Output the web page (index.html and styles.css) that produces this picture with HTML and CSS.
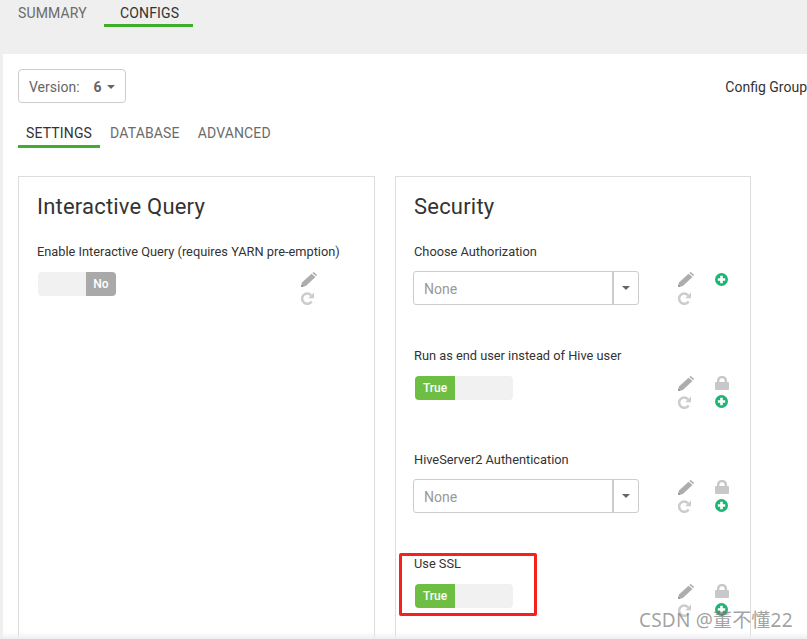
FILE: index.html
```html
<!DOCTYPE html>
<html lang="en">
<head>
<meta charset="utf-8">
<title>Configs</title>
<link rel="stylesheet" href="styles.css">
</head>
<body>
<svg class="defs" width="0" height="0" aria-hidden="true">
  <symbol id="i-pencil" viewBox="0 0 16 15">
    <path d="M0 15 1 10.500 10.500 1.800 14.500 5 4.800 14Z" fill="#adadad"/>
    <path d="M11.500 1 12.500 0 16 3 15.200 4Z" fill="#a0a0a0"/>
    <path d="M0 15 .6 12.400 2.800 14.400Z" fill="#8f8f8f"/>
  </symbol>
  <symbol id="i-refresh" viewBox="0 0 13 13">
    <path d="M10.600 9.300A5.100 5.100 0 1 1 10 3.300" fill="none" stroke="#cccccc" stroke-width="2.500"/>
    <path d="M13 .5V6.300H7.200Z" fill="#cccccc"/>
  </symbol>
  <symbol id="i-lock" viewBox="0 0 14 14">
    <path d="M3.200 7V4.300a3.800 3.300 0 0 1 7.600 0V7" fill="none" stroke="#c8c8c8" stroke-width="2.400"/>
    <rect x="0" y="6" width="14" height="8" rx=".8" fill="#c8c8c8"/>
  </symbol>
  <symbol id="i-add" viewBox="0 0 14 14">
    <circle cx="7" cy="7" r="7" fill="#1eb475"/>
    <path d="M5.600 3h2.800v2.600H11v2.800H8.400V11H5.600V8.400H3V5.600h2.600Z" fill="#fff"/>
  </symbol>
</svg>

<div class="page">
  <nav class="top-tabs">
    <a class="top-tab first">SUMMARY</a>
    <a class="top-tab active">CONFIGS</a>
  </nav>

  <main class="main">
    <div class="version-row">
      <button class="version-btn">Version: <b class="version-num">6</b><span class="caret"></span></button>
      <span class="config-group">Config Group</span>
    </div>

    <nav class="sub-tabs">
      <a class="sub-tab active">SETTINGS</a>
      <a class="sub-tab">DATABASE</a>
      <a class="sub-tab">ADVANCED</a>
    </nav>

    <div class="cards">
      <section class="card card-left">
        <h2 class="card-title">Interactive Query</h2>
        <div class="field">
          <div class="field-label">Enable Interactive Query (requires YARN pre-emption)</div>
          <div class="control-row">
            <div class="control">
              <div class="toggle toggle-off"><span class="toggle-track"></span><span class="toggle-no">No</span></div>
            </div>
            <div class="tools">
              <svg class="ico-pencil"><use href="#i-pencil"/></svg>
              <span></span>
              <svg class="ico-refresh"><use href="#i-refresh"/></svg>
            </div>
          </div>
        </div>
      </section>

      <section class="card">
        <h2 class="card-title">Security</h2>
        <div class="field">
          <div class="field-label">Choose Authorization</div>
          <div class="control-row">
            <div class="control">
              <div class="combo"><span class="combo-value">None</span><span class="combo-btn"><span class="caret"></span></span></div>
            </div>
            <div class="tools">
              <svg class="ico-pencil"><use href="#i-pencil"/></svg>
              <svg class="ico-add"><use href="#i-add"/></svg>
              <svg class="ico-refresh"><use href="#i-refresh"/></svg>
            </div>
          </div>
        </div>
        <div class="field">
          <div class="field-label">Run as end user instead of Hive user</div>
          <div class="control-row">
            <div class="control">
              <div class="toggle toggle-on"><span class="toggle-yes">True</span><span class="toggle-track"></span></div>
            </div>
            <div class="tools">
              <svg class="ico-pencil"><use href="#i-pencil"/></svg>
              <svg class="ico-lock"><use href="#i-lock"/></svg>
              <svg class="ico-refresh"><use href="#i-refresh"/></svg>
              <svg class="ico-add"><use href="#i-add"/></svg>
            </div>
          </div>
        </div>
        <div class="field">
          <div class="field-label">HiveServer2 Authentication</div>
          <div class="control-row">
            <div class="control">
              <div class="combo"><span class="combo-value">None</span><span class="combo-btn"><span class="caret"></span></span></div>
            </div>
            <div class="tools">
              <svg class="ico-pencil"><use href="#i-pencil"/></svg>
              <svg class="ico-lock"><use href="#i-lock"/></svg>
              <svg class="ico-refresh"><use href="#i-refresh"/></svg>
              <svg class="ico-add"><use href="#i-add"/></svg>
            </div>
          </div>
        </div>
        <div class="field">
          <div class="field-label">Use SSL</div>
          <div class="control-row">
            <div class="control">
              <div class="toggle toggle-on"><span class="toggle-yes">True</span><span class="toggle-track"></span></div>
            </div>
            <div class="tools">
              <svg class="ico-pencil"><use href="#i-pencil"/></svg>
              <svg class="ico-lock"><use href="#i-lock"/></svg>
              <svg class="ico-refresh"><use href="#i-refresh"/></svg>
              <svg class="ico-add"><use href="#i-add"/></svg>
            </div>
          </div>
        </div>
      </section>
    </div>
  </main>

  <div class="highlight"></div>
  <div class="bottom-fade"></div>
  <div class="watermark">CSDN @董不懂22</div>
</div>
</body>
</html>
```

FILE: styles.css
```css
* { box-sizing: border-box; }
html, body { margin: 0; padding: 0; height: 100%; overflow: hidden; }
body { font-family: Roboto, "Liberation Sans", sans-serif; color: #333; background: #efefef; }
.defs { position: absolute; }

.page { position: relative; width: 807px; height: 639px; overflow: hidden; background: #efefef; }

.top-tabs { display: flex; height: 54px; padding-left: 4px; align-items: flex-start; }
.top-tab { display: block; height: 27px; padding: 4px 16px 0 14px; font-size: 14px; line-height: 18px; letter-spacing: .15px; color: #6b6b6b; }
.top-tab.first { width: 100px; }
.top-tab.active { width: 89px; padding: 4px 0 0 16px; color: #333; border-bottom: 3px solid #3fae2a; }

.main { margin-left: 3px; height: 585px; padding: 15px 0 0 15px; background: #fff; }

.version-row { display: flex; justify-content: space-between; align-items: center; height: 34px; }
.version-btn { display: flex; align-items: center; width: 108px; height: 34px; padding: 1px 0 0 10px; border: 1px solid #ccc; border-radius: 4px; background: #fff; font: 14px Roboto, sans-serif; color: #666; }
.version-num { margin-left: 14px; font-weight: 700; color: #666; }
.caret { display: inline-block; width: 0; height: 0; border-top: 4px solid #666; border-left: 4px solid transparent; border-right: 4px solid transparent; }
.version-btn .caret { margin-left: 5px; }
.config-group { padding-top: 2px; font-size: 14px; color: #333; white-space: nowrap; }

.sub-tabs { display: flex; margin-top: 22px; height: 23px; }
.sub-tab { display: block; height: 23px; padding: 0 8px 0 10px; font-size: 14px; line-height: 17px; letter-spacing: .15px; color: #6b6b6b; }
.sub-tab.active { padding: 0 8px; color: #333; border-bottom: 3px solid #3fae2a; }

.cards { display: flex; gap: 20px; margin-top: 28px; }
.card { width: 356px; height: 470px; padding: 15px 0 0 18px; border: 1px solid #ddd; background: #fff; }
.card-left { width: 357px; }
.card-title { margin: 0 0 21px; font-size: 22px; line-height: 30px; font-weight: 400; letter-spacing: .2px; color: #333; }

.field { height: 104px; }
.field-label { height: 17px; margin-bottom: 11px; padding-top: 1px; font-size: 12.800px; line-height: 16px; color: #333; white-space: nowrap; }
.control-row { display: flex; align-items: flex-start; }
.control { width: 264px; flex: none; }

.toggle { display: flex; height: 24px; margin: 1px 0 0 1px; border-radius: 4px; overflow: hidden; background: #f1f1f1; font-size: 12px; font-weight: 500; line-height: 24px; color: #fff; text-align: center; }
.toggle-off { width: 78px; }
.toggle-on { width: 98px; }
.toggle-track { flex: 1; }
.toggle-no { width: 30px; background: #a9a9a9; }
.toggle-yes { width: 40px; background: #6fbe44; }

.combo { display: flex; width: 226px; height: 34px; margin-left: -1px; border: 1px solid #ccc; border-radius: 3px; background: #fff; }
.combo-value { flex: 1; padding: 1px 0 0 10px; border-right: 2px solid #ccc; font-size: 14px; line-height: 32px; color: #999; }
.combo-btn { display: flex; align-items: center; justify-content: center; width: 24px; }

.tools { display: grid; grid-template-columns: 37px 14px; grid-auto-rows: 20px; margin-top: 1px; }
.ico-pencil { width: 16px; height: 15px; }
.ico-refresh { width: 13px; height: 13px; }
.ico-lock { width: 14px; height: 14px; }
.ico-add { width: 13px; height: 13px; margin-top: -1px; }
.tools .ico-add:nth-child(2) { margin-top: 1px; }

.highlight { position: absolute; left: 399px; top: 553px; width: 138px; height: 63px; border: 3px solid #f5211c; border-radius: 2px; }
.bottom-fade { position: absolute; left: 0; right: 0; bottom: 0; height: 7px; background: linear-gradient(#fff0, #eeeef3); }
.watermark { position: absolute; left: 639px; top: 607px; font-family: "Noto Sans", "Noto Sans CJK SC", sans-serif; font-size: 19px; line-height: 26px; letter-spacing: .2px; color: rgba(120, 120, 120, .7); white-space: nowrap; }
```
